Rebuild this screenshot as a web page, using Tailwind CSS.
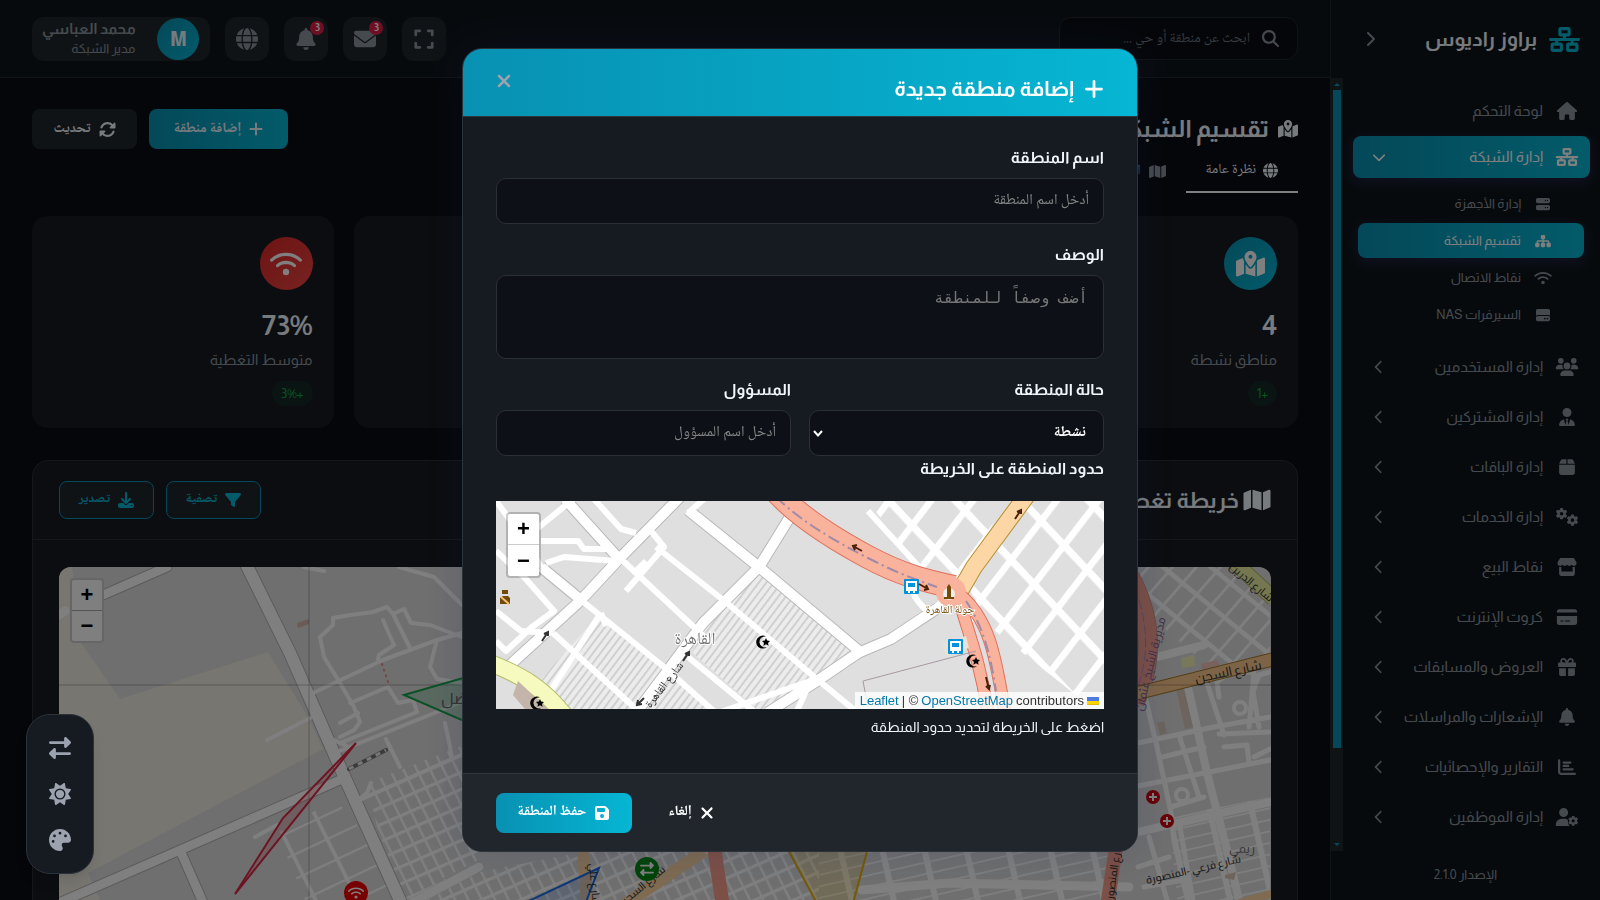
<!DOCTYPE html>
<html lang="ar" dir="rtl">
<head>
    <meta charset="UTF-8">
    <meta name="viewport" content="width=device-width, initial-scale=1.0">
    <title>براوز راديوس - تقسيم الشبكة</title>
    <script src="https://cdn.jsdelivr.net/npm/@tailwindcss/browser@4"></script>
</head>
<body class="h-screen overflow-hidden bg-[#0a0d13] text-[#f0f6fc] font-[Almarai,'Noto_Sans',sans-serif]">

    <!-- Icons -->
    <svg class="hidden">
        <symbol id="network" viewBox="0 0 640 512"><path d="M256 64H384v64H256V64zM240 0c-26.5 0-48 21.5-48 48v96c0 26.5 21.5 48 48 48h48v32H32c-17.7 0-32 14.3-32 32s14.3 32 32 32h96v32H80c-26.5 0-48 21.5-48 48v96c0 26.5 21.5 48 48 48H240c26.5 0 48-21.5 48-48V368c0-26.5-21.5-48-48-48H192V288H448v32H400c-26.5 0-48 21.5-48 48v96c0 26.5 21.5 48 48 48H560c26.5 0 48-21.5 48-48V368c0-26.5-21.5-48-48-48H512V288h96c17.7 0 32-14.3 32-32s-14.3-32-32-32H352V192h48c26.5 0 48-21.5 48-48V48c0-26.5-21.5-48-48-48H240zM96 448V384H224v64H96zm320-64H544v64H416V384z"/></symbol>
        <symbol id="home" viewBox="0 0 576 512"><path d="M575.8 255.5c0 18-15 32.1-32 32.1h-32l.7 160.2c0 2.7-.2 5.4-.5 8.1V472c0 22.1-17.9 40-40 40H456c-1.1 0-2.2 0-3.3-.1c-1.4 .1-2.8 .1-4.2 .1H416 392c-22.1 0-40-17.9-40-40V448 384c0-17.7-14.3-32-32-32H256c-17.7 0-32 14.3-32 32v64 24c0 22.1-17.9 40-40 40H160 128.1c-1.5 0-3-.1-4.5-.2c-1.2 .1-2.4 .2-3.6 .2H104c-22.1 0-40-17.9-40-40V360c0-.9 0-1.9 .1-2.8V287.6H32c-18 0-32-14-32-32.1c0-9 3-17 10-24L266.4 8c7-7 15-8 22-8s15 2 21 7L564.8 231.5c8 7 12 15 11 24z"/></symbol>
        <symbol id="server" viewBox="0 0 512 512"><path d="M64 32C28.7 32 0 60.7 0 96v64c0 35.3 28.7 64 64 64H448c35.3 0 64-28.7 64-64V96c0-35.3-28.7-64-64-64H64zm280 72a24 24 0 1 1 0 48 24 24 0 1 1 0-48zm48 24a24 24 0 1 1 48 0 24 24 0 1 1 -48 0zM64 288c-35.3 0-64 28.7-64 64v64c0 35.3 28.7 64 64 64H448c35.3 0 64-28.7 64-64V352c0-35.3-28.7-64-64-64H64zm280 72a24 24 0 1 1 0 48 24 24 0 1 1 0-48zm56 24a24 24 0 1 1 48 0 24 24 0 1 1 -48 0z"/></symbol>
        <symbol id="sitemap" viewBox="0 0 576 512"><path d="M208 80c0-26.5 21.5-48 48-48h64c26.5 0 48 21.5 48 48v64c0 26.5-21.5 48-48 48h-8v40H464c30.9 0 56 25.1 56 56v32h8c26.5 0 48 21.5 48 48v64c0 26.5-21.5 48-48 48H464c-26.5 0-48-21.5-48-48V368c0-26.5 21.5-48 48-48h8V288c0-4.4-3.6-8-8-8H312v40h8c26.5 0 48 21.5 48 48v64c0 26.5-21.5 48-48 48H256c-26.5 0-48-21.5-48-48V368c0-26.5 21.5-48 48-48h8V280H112c-4.4 0-8 3.6-8 8v32h8c26.5 0 48 21.5 48 48v64c0 26.5-21.5 48-48 48H48c-26.5 0-48-21.5-48-48V368c0-26.5 21.5-48 48-48h8V288c0-30.9 25.1-56 56-56H264V192h-8c-26.5 0-48-21.5-48-48V80z"/></symbol>
        <symbol id="wifi" viewBox="0 0 640 512"><path d="M54.2 202.9C123.2 136.7 216.8 96 320 96s196.8 40.7 265.8 106.9c12.8 12.2 33 11.8 45.2-.9s11.8-33-.9-45.2C549.7 79.5 440.4 32 320 32S90.3 79.5 9.8 156.7C-2.9 169-3.3 189.2 8.9 202s32.5 13.2 45.2 .9zM320 256c56.8 0 108.6 21.1 148.2 56c13.3 11.7 33.5 10.4 45.2-2.8s10.4-33.5-2.8-45.2C459.8 219.2 393 192 320 192s-139.8 27.2-190.5 72c-13.3 11.7-14.5 31.9-2.8 45.2s31.9 14.5 45.2 2.8c39.5-34.9 91.3-56 148.2-56zm64 160a64 64 0 1 0 -128 0 64 64 0 1 0 128 0z"/></symbol>
        <symbol id="hdd" viewBox="0 0 512 512"><path d="M0 96C0 60.7 28.7 32 64 32H448c35.3 0 64 28.7 64 64V280.4c-17-15.2-39.4-24.4-64-24.4H64c-24.6 0-47 9.2-64 24.4V96zM64 288H448c35.3 0 64 28.7 64 64v64c0 35.3-28.7 64-64 64H64c-35.3 0-64-28.7-64-64V352c0-35.3 28.7-64 64-64zM320 416a32 32 0 1 0 0-64 32 32 0 1 0 0 64zm128-32a32 32 0 1 0 -64 0 32 32 0 1 0 64 0z"/></symbol>
        <symbol id="users" viewBox="0 0 640 512"><path d="M144 0a80 80 0 1 1 0 160A80 80 0 1 1 144 0zM512 0a80 80 0 1 1 0 160A80 80 0 1 1 512 0zM0 298.7C0 239.8 47.8 192 106.7 192h42.7c15.9 0 31 3.5 44.6 9.7c-1.3 7.2-1.9 14.7-1.9 22.3c0 38.2 16.8 72.5 43.3 96c-.2 0-.4 0-.7 0H21.3C9.6 320 0 310.4 0 298.7zM405.3 320c-.2 0-.4 0-.7 0c26.6-23.5 43.3-57.8 43.3-96c0-7.6-.7-15-1.9-22.3c13.6-6.3 28.7-9.7 44.6-9.7h42.7C592.2 192 640 239.8 640 298.7c0 11.8-9.6 21.3-21.3 21.3H405.3zM224 224a96 96 0 1 1 192 0 96 96 0 1 1 -192 0zM128 485.3C128 411.7 187.7 352 261.3 352H378.7C452.3 352 512 411.7 512 485.3c0 14.7-11.9 26.7-26.7 26.7H154.7c-14.7 0-26.7-11.9-26.7-26.7z"/></symbol>
        <symbol id="user-tie" viewBox="0 0 448 512"><path d="M96 128a128 128 0 1 0 256 0A128 128 0 1 0 96 128zm94.5 200.2l18.6 31L175.8 483.1l-36-146.9c-2-8.1-9.8-13.4-17.9-11.3C51.9 342.4 0 405.8 0 481.3c0 17 13.8 30.7 30.7 30.7H417.3c17 0 30.7-13.8 30.7-30.7c0-75.5-51.9-138.9-121.9-156.4c-8.1-2-15.9 3.3-17.9 11.3l-36 146.9L238.9 359.2l18.6-31c6.4-10.7-1.3-24.2-13.7-24.2H224 204.3c-12.4 0-20.1 13.6-13.7 24.2z"/></symbol>
        <symbol id="box" viewBox="0 0 448 512"><path d="M50.7 58.5L0 160H208V32H93.7C75.5 32 58.9 42.3 50.7 58.5zM240 160H448L397.3 58.5C389.1 42.3 372.5 32 354.3 32H240V160zm208 32H0V416c0 35.3 28.7 64 64 64H384c35.3 0 64-28.7 64-64V192z"/></symbol>
        <symbol id="gear" viewBox="0 0 512 512"><path d="M495.9 166.6c3.2 8.7 .5 18.4-6.4 24.6l-43.3 39.4c1.1 8.3 1.7 16.8 1.7 25.4s-.6 17.1-1.7 25.4l43.3 39.4c6.9 6.2 9.6 15.9 6.4 24.6c-4.4 11.9-9.7 23.3-15.8 34.3l-4.7 8.1c-6.6 11-14 21.4-22.1 31.2c-5.9 7.2-15.7 9.6-24.5 6.8l-55.7-17.7c-13.4 10.3-28.2 18.9-44 25.4l-12.5 57.1c-2 9.1-9 16.3-18.2 17.8c-13.8 2.3-28 3.5-42.5 3.5s-28.7-1.2-42.5-3.5c-9.2-1.5-16.2-8.7-18.2-17.8l-12.5-57.1c-15.8-6.5-30.6-15.1-44-25.4L83.1 425.9c-8.8 2.8-18.6 .3-24.5-6.8c-8.1-9.8-15.5-20.2-22.1-31.2l-4.7-8.1c-6.1-11-11.4-22.4-15.8-34.3c-3.2-8.7-.5-18.4 6.4-24.6l43.3-39.4C64.6 273.1 64 264.6 64 256s.6-17.1 1.7-25.4L22.4 191.2c-6.9-6.2-9.6-15.9-6.4-24.6c4.4-11.9 9.7-23.3 15.8-34.3l4.7-8.1c6.6-11 14-21.4 22.1-31.2c5.9-7.2 15.7-9.6 24.5-6.8l55.7 17.7c13.4-10.3 28.2-18.9 44-25.4l12.5-57.1c2-9.1 9-16.3 18.2-17.8C227.3 1.2 241.5 0 256 0s28.7 1.2 42.5 3.5c9.2 1.5 16.2 8.7 18.2 17.8l12.5 57.1c15.8 6.5 30.6 15.1 44 25.4l55.7-17.7c8.8-2.8 18.6-.3 24.5 6.8c8.1 9.8 15.5 20.2 22.1 31.2l4.7 8.1c6.1 11 11.4 22.4 15.8 34.3zM256 336a80 80 0 1 0 0-160 80 80 0 1 0 0 160z"/></symbol>
        <symbol id="gears" viewBox="0 0 640 512"><use href="#gear" width="330" height="330"/><use href="#gear" x="310" y="180" width="330" height="330"/></symbol>
        <symbol id="user-gear" viewBox="0 0 640 512"><path d="M224 256A128 128 0 1 0 224 0a128 128 0 1 0 0 256zm-45.7 48C79.800 304 0 383.800 0 482.300C0 498.700 13.300 512 29.700 512H392c-35-38-52-98-45-170c-27-24-60-38-98-38z"/><use href="#gear" x="352" y="220" width="288" height="292"/></symbol>
        <symbol id="store" viewBox="0 0 576 512"><path d="M547.6 103.8L490.3 13.1C485.2 5 476.1 0 466.4 0H109.6C99.9 0 90.8 5 85.7 13.1L28.3 103.8c-29.6 46.8-3.4 111.9 51.9 119.4c4 .5 8.1 .8 12.1 .8c26.1 0 49.3-11.4 65.2-29c15.9 17.6 39.1 29 65.2 29c26.1 0 49.3-11.4 65.2-29c15.9 17.6 39.1 29 65.2 29c26.2 0 49.3-11.4 65.2-29c16 17.6 39.1 29 65.2 29c4.1 0 8.1-.3 12.1-.8c55.5-7.4 81.8-72.5 52.1-119.4zM499.7 254.9l-.1 0c-5.3 .7-10.7 1.1-16.2 1.1c-12.4 0-24.3-1.9-35.4-5.3V384H128V250.6c-11.2 3.5-23.2 5.4-35.6 5.4c-5.5 0-11-.4-16.300-1.100l-.1 0c-4.100-.6-8.100-1.300-12-2.300V384v64c0 35.300 28.700 64 64 64H448c35.300 0 64-28.700 64-64V384 252.600c-4 1-8 1.800-12.300 2.300z"/></symbol>
        <symbol id="card" viewBox="0 0 576 512"><path d="M64 32C28.700 32 0 60.700 0 96v32H576V96c0-35.300-28.700-64-64-64H64zM576 224H0V416c0 35.300 28.700 64 64 64H512c35.300 0 64-28.700 64-64V224zM112 352h64c8.800 0 16 7.200 16 16s-7.200 16-16 16H112c-8.800 0-16-7.200-16-16s7.200-16 16-16zm112 16c0-8.800 7.200-16 16-16H368c8.800 0 16 7.200 16 16s-7.200 16-16 16H240c-8.800 0-16-7.200-16-16z"/></symbol>
        <symbol id="gift" viewBox="0 0 512 512"><path d="M190.5 68.8L225.3 128H224 152c-22.1 0-40-17.9-40-40s17.9-40 40-40h2.2c14.9 0 28.8 7.9 36.3 20.8zM64 88c0 14.4 3.500 28 9.600 40H32c-17.700 0-32 14.300-32 32v64c0 17.700 14.300 32 32 32H480c17.700 0 32-14.300 32-32V160c0-17.700-14.300-32-32-32H438.400c6.100-12 9.600-25.600 9.600-40c0-48.600-39.400-88-88-88h-2.200c-31.900 0-61.500 16.900-77.700 44.400L256 85.500l-24.100-41C215.700 16.900 186.100 0 154.200 0H152C103.400 0 64 39.400 64 88zm336 0c0 22.100-17.900 40-40 40H288h-1.300l34.800-59.200C329.100 55.900 342.900 48 357.800 48H360c22.100 0 40 17.900 40 40zM32 288V464c0 26.500 21.500 48 48 48H224V288H32zM288 512H432c26.500 0 48-21.500 48-48V288H288V512z"/></symbol>
        <symbol id="bell" viewBox="0 0 448 512"><path d="M224 0c-17.7 0-32 14.3-32 32V51.2C119 66 64 130.6 64 208v18.8c0 47-17.3 92.4-48.5 127.6l-7.4 8.3c-8.4 9.4-10.4 22.9-5.3 34.4S19.4 416 32 416H416c12.6 0 24-7.4 29.2-18.9s3.1-25-5.3-34.4l-7.4-8.3C401.3 319.2 384 273.9 384 226.8V208c0-77.4-55-142-128-156.8V32c0-17.7-14.3-32-32-32zm45.3 493.3c12-12 18.7-28.3 18.7-45.3H224 160c0 17 6.7 33.3 18.7 45.3s28.3 18.7 45.3 18.7s33.3-6.7 45.3-18.7z"/></symbol>
        <symbol id="chart" viewBox="0 0 512 512"><path d="M32 32c17.7 0 32 14.3 32 32V400c0 8.8 7.2 16 16 16H480c17.7 0 32 14.3 32 32s-14.3 32-32 32H80c-44.2 0-80-35.8-80-80V64C0 46.3 14.3 32 32 32zm96 96c0-17.7 14.3-32 32-32l192 0c17.7 0 32 14.3 32 32s-14.3 32-32 32H160c-17.7 0-32-14.3-32-32zm32 64H288c17.7 0 32 14.3 32 32s-14.3 32-32 32H160c-17.7 0-32-14.3-32-32s14.3-32 32-32zm0 96H416c17.7 0 32 14.3 32 32s-14.3 32-32 32H160c-17.7 0-32-14.3-32-32s14.3-32 32-32z"/></symbol>
        <symbol id="map-pin" viewBox="0 0 576 512"><path d="M408 120c0 54.6-73.1 151.9-105.2 192c-7.7 9.6-22 9.6-29.6 0C241.1 271.9 168 174.6 168 120C168 53.7 221.7 0 288 0s120 53.7 120 120zm8 80.4c3.5-6.9 6.7-13.8 9.6-20.6c.5-1.2 1-2.5 1.5-3.7l116-46.4C558.9 123.4 576 135 576 152V422.8c0 9.8-6 18.6-15.1 22.3L416 503V200.4zM137.6 138.3c2.4 14.1 7.2 28.3 12.8 41.5c2.9 6.8 6.1 13.7 9.6 20.6V451.8L32.9 502.7C17.1 509 0 497.4 0 480.4V209.6c0-9.8 6-18.6 15.1-22.3l122.6-49zM327.8 332c13.9-17.4 35.7-45.7 56.2-77V504.3L192 449.4V255c20.500 31.300 42.300 59.600 56.200 77c20.500 25.600 59.100 25.600 79.600 0zM288 152a40 40 0 1 0 0-80 40 40 0 1 0 0 80z"/></symbol>
        <symbol id="map" viewBox="0 0 576 512"><path d="M384 476.1L192 421.2V35.9L384 90.8V476.1zm32-1.2V88.4L543.1 37.5c15.8-6.3 32.9 5.3 32.9 22.3V394.6c0 9.8-6 18.6-15.1 22.3L416 474.8zM15.1 95.1L160 37.2V423.6L32.9 474.5C17.1 480.8 0 469.2 0 452.2V117.4c0-9.8 6-18.6 15.1-22.3z"/></symbol>
        <symbol id="globe" viewBox="0 0 512 512"><path d="M352 256c0 22.2-1.2 43.6-3.3 64H163.3c-2.2-20.4-3.3-41.8-3.3-64s1.2-43.6 3.3-64H348.7c2.2 20.4 3.3 41.8 3.3 64zm28.8-64H503.9c5.3 20.5 8.1 41.9 8.1 64s-2.8 43.5-8.1 64H380.8c2.1-20.6 3.2-42 3.2-64s-1.1-43.4-3.2-64zm112.6-32H376.7c-10-63.9-29.8-117.4-55.3-151.6c78.3 20.7 142 77.5 171.9 151.6zm-149.1 0H167.7c6.1-36.4 15.5-68.6 27-94.7c10.5-23.6 22.2-40.7 33.5-51.5C239.4 3.2 248.7 0 256 0s16.6 3.2 27.8 13.8c11.3 10.8 23 27.9 33.5 51.5c11.6 26 20.9 58.2 27 94.7zm-209 0H18.6C48.6 85.9 112.2 29.1 190.6 8.4C165.1 42.6 145.3 96.1 135.3 160zM8.1 192H131.2c-2.1 20.6-3.2 42-3.2 64s1.1 43.4 3.2 64H8.1C2.8 299.5 0 278.1 0 256s2.8-43.5 8.1-64zM194.7 446.6c-11.6-26-20.9-58.2-27-94.6H344.3c-6.1 36.4-15.5 68.6-27 94.6c-10.5 23.6-22.2 40.7-33.5 51.5C272.6 508.8 263.3 512 256 512s-16.6-3.2-27.8-13.8c-11.3-10.8-23-27.9-33.5-51.5zM135.3 352c10 63.9 29.8 117.4 55.3 151.6C112.2 482.9 48.6 426.1 18.6 352H135.3zm358.1 0c-30 74.1-93.6 130.9-171.9 151.6c25.5-34.2 45.2-87.7 55.3-151.6H493.4z"/></symbol>
        <symbol id="mail" viewBox="0 0 512 512"><path d="M48 64C21.5 64 0 85.5 0 112c0 15.1 7.1 29.3 19.2 38.4L236.8 313.6c11.4 8.5 27 8.5 38.4 0L492.8 150.4c12.1-9.1 19.2-23.3 19.2-38.4c0-26.5-21.5-48-48-48H48zM0 176V384c0 35.3 28.7 64 64 64H448c35.3 0 64-28.7 64-64V176L294.4 339.2c-22.8 17.1-54 17.1-76.8 0L0 176z"/></symbol>
        <symbol id="expand" viewBox="0 0 448 512"><path d="M32 32C14.3 32 0 46.3 0 64v96c0 17.7 14.3 32 32 32s32-14.3 32-32V96h64c17.7 0 32-14.3 32-32s-14.3-32-32-32H32zM64 352c0-17.7-14.3-32-32-32s-32 14.3-32 32v96c0 17.7 14.3 32 32 32h96c17.7 0 32-14.3 32-32s-14.3-32-32-32H64V352zM320 32c-17.7 0-32 14.3-32 32s14.3 32 32 32h64v64c0 17.7 14.3 32 32 32s32-14.3 32-32V64c0-17.7-14.3-32-32-32H320zM448 352c0-17.7-14.3-32-32-32s-32 14.3-32 32v64H320c-17.7 0-32 14.3-32 32s14.3 32 32 32h96c17.7 0 32-14.3 32-32V352z"/></symbol>
        <symbol id="search" viewBox="0 0 512 512"><path d="M416 208c0 45.9-14.9 88.3-40 122.7L502.6 457.4c12.5 12.5 12.5 32.8 0 45.3s-32.8 12.5-45.3 0L330.7 376c-34.4 25.2-76.8 40-122.7 40C93.1 416 0 322.9 0 208S93.1 0 208 0S416 93.1 416 208zM208 352a144 144 0 1 0 0-288 144 144 0 1 0 0 288z"/></symbol>
        <symbol id="plus" viewBox="0 0 448 512"><path d="M256 80c0-17.7-14.3-32-32-32s-32 14.3-32 32V224H48c-17.7 0-32 14.3-32 32s14.3 32 32 32H192V432c0 17.7 14.3 32 32 32s32-14.3 32-32V288H400c17.7 0 32-14.3 32-32s-14.3-32-32-32H256V80z"/></symbol>
        <symbol id="sync" viewBox="0 0 512 512"><path d="M142.9 142.9c62.2-62.2 162.7-62.5 225.3-1L327 183c-6.9 6.9-8.9 17.2-5.2 26.2s12.5 14.8 22.2 14.8H463.5H472c13.3 0 24-10.7 24-24V72c0-9.7-5.8-18.5-14.8-22.2s-19.3-1.7-26.2 5.2L413.4 96.6c-87.6-86.5-228.7-86.2-315.8 1C73.2 122 55.6 150.7 44.8 181.4c-5.9 16.7 2.9 34.9 19.5 40.8s34.9-2.9 40.8-19.5c7.7-21.8 20.2-42.3 37.8-59.8zM16 312v7.6 .7V440c0 9.7 5.8 18.5 14.8 22.2s19.3 1.7 26.2-5.2l41.6-41.6c87.6 86.5 228.7 86.2 315.8-1c24.4-24.4 42.1-53.1 52.9-83.7c5.9-16.7-2.9-34.9-19.5-40.8s-34.9 2.9-40.8 19.5c-7.7 21.8-20.2 42.3-37.8 59.8c-62.2 62.2-162.7 62.5-225.3 1L185 329c6.9-6.9 8.9-17.2 5.2-26.2s-12.5-14.8-22.2-14.8H48.4h-.7H40c-13.3 0-24 10.7-24 24z"/></symbol>
        <symbol id="filter" viewBox="0 0 512 512"><path d="M3.9 54.9C10.5 40.9 24.5 32 40 32H472c15.5 0 29.5 8.9 36.1 22.9s4.6 30.5-5.2 42.5L320 320.9V448c0 12.1-6.8 23.2-17.7 28.6s-23.8 4.3-33.5-3l-64-48c-8.1-6-12.8-15.5-12.8-25.6V320.9L9 97.3C-.7 85.4-2.8 68.8 3.9 54.9z"/></symbol>
        <symbol id="download" viewBox="0 0 512 512"><path d="M288 32c0-17.7-14.3-32-32-32s-32 14.3-32 32V274.7l-73.4-73.4c-12.5-12.5-32.8-12.5-45.3 0s-12.5 32.8 0 45.3l128 128c12.5 12.5 32.8 12.5 45.3 0l128-128c12.5-12.5 12.5-32.8 0-45.3s-32.8-12.5-45.3 0L288 274.7V32zM64 352c-35.3 0-64 28.7-64 64v32c0 35.3 28.7 64 64 64H448c35.3 0 64-28.7 64-64V416c0-35.3-28.7-64-64-64H346.5l-45.3 45.3c-25 25-65.5 25-90.5 0L165.5 352H64zm368 56a24 24 0 1 1 0 48 24 24 0 1 1 0-48z"/></symbol>
        <symbol id="xmark" viewBox="0 0 384 512"><path d="M342.6 150.6c12.5-12.5 12.5-32.8 0-45.3s-32.8-12.5-45.3 0L192 210.7 86.6 105.4c-12.5-12.5-32.8-12.5-45.3 0s-12.5 32.8 0 45.3L146.7 256 41.4 361.4c-12.5 12.5-12.5 32.8 0 45.3s32.8 12.5 45.3 0L192 301.3 297.4 406.6c12.5 12.5 32.8 12.5 45.3 0s12.5-32.8 0-45.3L237.3 256 342.6 150.6z"/></symbol>
        <symbol id="save" viewBox="0 0 448 512"><path d="M64 32C28.7 32 0 60.7 0 96V416c0 35.3 28.7 64 64 64H384c35.3 0 64-28.7 64-64V173.3c0-17-6.7-33.3-18.7-45.3L352 50.7C340 38.7 323.7 32 306.7 32H64zm0 96c0-17.7 14.3-32 32-32H288c17.7 0 32 14.3 32 32v64c0 17.7-14.3 32-32 32H96c-17.7 0-32-14.3-32-32V128zM224 288a64 64 0 1 1 0 128 64 64 0 1 1 0-128z"/></symbol>
        <symbol id="chevron" viewBox="0 0 320 512"><path d="M9.4 233.4c-12.5 12.5-12.5 32.8 0 45.3l192 192c12.5 12.5 32.8 12.5 45.3 0s12.5-32.8 0-45.3L77.3 256 246.6 86.6c12.5-12.5 12.5-32.8 0-45.3s-32.8-12.5-45.3 0l-192 192z"/></symbol>
        <symbol id="swap" viewBox="0 0 512 512"><path d="M32 96l320 0V32c0-12.9 7.8-24.6 19.8-29.6s25.7-2.2 34.900 6.900l96 96c6 6 9.400 14.100 9.400 22.600s-3.400 16.600-9.400 22.600l-96 96c-9.200 9.200-22.900 11.900-34.900 6.900s-19.800-16.600-19.800-29.600V160L32 160c-17.700 0-32-14.300-32-32s14.300-32 32-32zM480 352c17.700 0 32 14.300 32 32s-14.300 32-32 32H160v64c0 12.900-7.800 24.600-19.800 29.600s-25.700 2.200-34.900-6.900l-96-96c-6-6-9.400-14.100-9.400-22.600s3.400-16.600 9.400-22.600l96-96c9.200-9.200 22.900-11.900 34.900-6.900s19.800 16.600 19.800 29.600l0 64H480z"/></symbol>
        <symbol id="sun" viewBox="0 0 512 512"><path d="M361.5 1.200c5 2.100 8.600 6.600 9.600 11.900L391 121l107.900 19.800c5.300 1 9.800 4.600 11.900 9.600s1.500 10.700-1.600 15.200L446.900 256l62.300 90.300c3.100 4.500 3.700 10.200 1.600 15.200s-6.600 8.600-11.900 9.600L391 391 371.100 498.900c-1 5.300-4.600 9.800-9.600 11.900s-10.700 1.500-15.200-1.600L256 446.900l-90.300 62.300c-4.500 3.100-10.200 3.700-15.200 1.600s-8.600-6.600-9.600-11.900L121 391 13.100 371.100c-5.300-1-9.800-4.600-11.900-9.600s-1.500-10.700 1.600-15.200L65.100 256 2.800 165.700c-3.100-4.500-3.700-10.200-1.600-15.200s6.600-8.600 11.900-9.600L121 121 140.900 13.100c1-5.300 4.600-9.800 9.600-11.900s10.700-1.500 15.200 1.600L256 65.100 346.300 2.800c4.500-3.100 10.200-3.700 15.200-1.600zM160 256a96 96 0 1 1 192 0 96 96 0 1 1 -192 0zm224 0a128 128 0 1 0 -256 0 128 128 0 1 0 256 0z"/></symbol>
        <symbol id="palette" viewBox="0 0 512 512"><path d="M512 256c0 .9 0 1.800 0 2.700c-.4 36.500-33.600 61.300-70.100 61.300H344c-26.500 0-48 21.500-48 48c0 3.400 .4 6.700 1 9.900c2.100 10.200 6.500 20 10.800 29.900c6.100 13.800 12.100 27.500 12.100 42c0 31.800-21.600 60.700-53.400 62c-3.500 .1-7 .2-10.600 .2C114.600 512 0 397.400 0 256S114.600 0 256 0S512 114.600 512 256zM128 288a32 32 0 1 0 -64 0 32 32 0 1 0 64 0zm0-96a32 32 0 1 0 0-64 32 32 0 1 0 0 64zM288 96a32 32 0 1 0 -64 0 32 32 0 1 0 64 0zm96 96a32 32 0 1 0 0-64 32 32 0 1 0 0 64z"/></symbol>
    </svg>

    <div class="flex h-full">
        <!-- Sidebar -->
        <aside class="flex w-[270px] shrink-0 flex-col border-l border-[#21262d] bg-[#0f151b]">
            <div class="flex h-[78px] shrink-0 items-center gap-3 pr-5 pl-[34px]">
                <svg class="h-[25px] w-[31px] fill-[#06b6d4]"><use href="#network"/></svg>
                <h2 class="grow text-xl font-bold">براوز راديوس</h2>
                <button type="button" aria-label="طي القائمة"><svg class="h-4 w-[10px] rotate-180 fill-[#8b949e]"><use href="#chevron"/></svg></button>
            </div>
            <div class="flex h-[773px] shrink-0">
                <nav class="grow overflow-hidden px-[10px] pt-3 text-[15px] whitespace-nowrap text-[#8b949e]">
                    <a href="#" class="flex h-[42px] items-center gap-3 pr-[11px]"><svg class="h-[18px] w-6 fill-current"><use href="#home"/></svg>لوحة التحكم</a>
                    <a href="#" class="mt-1 flex h-[42px] items-center gap-3 rounded-lg bg-linear-to-l from-[#06b6d4] to-[#0891b2] pr-[11px] pl-5 text-white shadow-[0_4px_12px_#6366f133]"><svg class="h-[18px] w-6 fill-current"><use href="#network"/></svg><span class="grow">إدارة الشبكة</span><svg class="h-[14px] w-3 -rotate-90 fill-current"><use href="#chevron"/></svg></a>
                    <div class="my-2 flex flex-col gap-[2px] pr-[6px] pl-[5px] text-[13px]">
                        <a href="#" class="flex h-[35px] items-center gap-[13px] pr-8"><svg class="h-[14px] w-[18px] fill-current"><use href="#server"/></svg>إدارة الأجهزة</a>
                        <a href="#" class="flex h-[35px] items-center gap-[13px] rounded-lg bg-linear-to-l from-[#06b6d4] to-[#0891b2] pr-8 text-white shadow-[0_4px_12px_#6366f133]"><svg class="h-[14px] w-[18px] fill-current"><use href="#sitemap"/></svg>تقسيم الشبكة</a>
                        <a href="#" class="flex h-[35px] items-center gap-[13px] pr-8"><svg class="h-[14px] w-[18px] fill-current"><use href="#wifi"/></svg>نقاط الاتصال</a>
                        <a href="#" class="flex h-[35px] items-center gap-[13px] pr-8"><svg class="h-[14px] w-[18px] fill-current"><use href="#hdd"/></svg>السيرفرات NAS</a>
                    </div>
                    <div class="flex flex-col gap-2 pt-[6px]">
                        <a href="#" class="flex h-[42px] items-center gap-3 pr-[11px] pl-5"><svg class="h-[18px] w-6 fill-current"><use href="#users"/></svg><span class="grow">إدارة المستخدمين</span><svg class="h-[14px] w-3 fill-current"><use href="#chevron"/></svg></a>
                        <a href="#" class="flex h-[42px] items-center gap-3 pr-[11px] pl-5"><svg class="h-[18px] w-6 fill-current"><use href="#user-tie"/></svg><span class="grow">إدارة المشتركين</span><svg class="h-[14px] w-3 fill-current"><use href="#chevron"/></svg></a>
                        <a href="#" class="flex h-[42px] items-center gap-3 pr-[11px] pl-5"><svg class="h-[18px] w-6 fill-current"><use href="#box"/></svg><span class="grow">إدارة الباقات</span><svg class="h-[14px] w-3 fill-current"><use href="#chevron"/></svg></a>
                        <a href="#" class="flex h-[42px] items-center gap-3 pr-[11px] pl-5"><svg class="h-[18px] w-6 fill-current"><use href="#gears"/></svg><span class="grow">إدارة الخدمات</span><svg class="h-[14px] w-3 fill-current"><use href="#chevron"/></svg></a>
                        <a href="#" class="flex h-[42px] items-center gap-3 pr-[11px] pl-5"><svg class="h-[18px] w-6 fill-current"><use href="#store"/></svg><span class="grow">نقاط البيع</span><svg class="h-[14px] w-3 fill-current"><use href="#chevron"/></svg></a>
                        <a href="#" class="flex h-[42px] items-center gap-3 pr-[11px] pl-5"><svg class="h-[18px] w-6 fill-current"><use href="#card"/></svg><span class="grow">كروت الإنترنت</span><svg class="h-[14px] w-3 fill-current"><use href="#chevron"/></svg></a>
                        <a href="#" class="flex h-[42px] items-center gap-3 pr-[11px] pl-5"><svg class="h-[18px] w-6 fill-current"><use href="#gift"/></svg><span class="grow">العروض والمسابقات</span><svg class="h-[14px] w-3 fill-current"><use href="#chevron"/></svg></a>
                        <a href="#" class="flex h-[42px] items-center gap-3 pr-[11px] pl-5"><svg class="h-[18px] w-6 fill-current"><use href="#bell"/></svg><span class="grow">الإشعارات والمراسلات</span><svg class="h-[14px] w-3 fill-current"><use href="#chevron"/></svg></a>
                        <a href="#" class="flex h-[42px] items-center gap-3 pr-[11px] pl-5"><svg class="h-[18px] w-6 fill-current"><use href="#chart"/></svg><span class="grow">التقارير والإحصائيات</span><svg class="h-[14px] w-3 fill-current"><use href="#chevron"/></svg></a>
                        <a href="#" class="flex h-[42px] items-center gap-3 pr-[11px] pl-5"><svg class="h-[18px] w-6 fill-current"><use href="#user-gear"/></svg><span class="grow">إدارة الموظفين</span><svg class="h-[14px] w-3 fill-current"><use href="#chevron"/></svg></a>
                    </div>
                </nav>
                <!-- Scroll bar -->
                <div class="flex w-3 shrink-0 flex-col items-center justify-between bg-[#20262a] px-[2px]">
                    <svg class="h-3 w-[6px] shrink-0 fill-[#0891b2]" viewBox="0 0 6 12"><path d="M0 8h6L3 5z"/></svg>
                    <div class="h-[658px] w-full bg-[#0891b2]"></div>
                    <svg class="mt-auto h-3 w-[6px] shrink-0 fill-[#0891b2]" viewBox="0 0 6 12"><path d="M0 4h6L3 7z"/></svg>
                </div>
            </div>
            <p class="pt-[14px] text-center text-[13px] text-[#8b949e]">الإصدار 2.1.0</p>
        </aside>

        <div class="flex min-w-0 grow flex-col">
            <!-- Top bar -->
            <header class="flex h-[78px] shrink-0 items-center justify-between border-b border-[#21262d] bg-[#0f151b] px-8">
                <label class="flex h-[43px] w-[239px] items-center gap-3 rounded-xl border border-[#21262d] bg-[#0a0d13] px-[18px]">
                    <svg class="h-[17px] w-[17px] shrink-0 fill-[#8b949e]"><use href="#search"/></svg>
                    <input type="text" aria-label="بحث" placeholder="ابحث عن منطقة أو حي ..." class="w-full min-w-0 bg-transparent font-['Noto_Naskh_Arabic',sans-serif] text-sm outline-none placeholder:text-[#6e7681]">
                </label>
                <div class="flex items-center gap-[15px]">
                    <button type="button" aria-label="ملء الشاشة" class="flex h-11 w-11 items-center justify-center rounded-xl bg-[#20262a]"><svg class="h-[22px] w-5 fill-[#8b949e]"><use href="#expand"/></svg></button>
                    <button type="button" aria-label="الرسائل" class="relative flex h-11 w-11 items-center justify-center rounded-xl bg-[#20262a]"><svg class="h-[22px] w-[22px] fill-[#8b949e]"><use href="#mail"/></svg><span class="absolute top-1 right-1 flex h-[14px] w-[14px] items-center justify-center rounded-full bg-[#e11d48] text-[10px] font-bold text-white">3</span></button>
                    <button type="button" aria-label="الإشعارات" class="relative flex h-11 w-11 items-center justify-center rounded-xl bg-[#20262a]"><svg class="h-[22px] w-[22px] fill-[#8b949e]"><use href="#bell"/></svg><span class="absolute top-1 right-1 flex h-[14px] w-[14px] items-center justify-center rounded-full bg-[#e11d48] text-[10px] font-bold text-white">3</span></button>
                    <button type="button" aria-label="اللغة" class="flex h-11 w-11 items-center justify-center rounded-xl bg-[#20262a]"><svg class="h-[22px] w-[22px] fill-[#8b949e]"><use href="#globe"/></svg></button>
                    <div class="flex h-11 items-center gap-[22px] rounded-xl bg-[#20262a] pr-[11px] pl-[10px]">
                        <div class="flex h-[42px] w-[42px] items-center justify-center rounded-full bg-linear-to-br from-[#0891b2] to-[#06b6d4] text-xl font-bold">M</div>
                        <div class="text-[#8b949e]">
                            <div class="text-[15px] leading-5 font-bold">محمد العباسي</div>
                            <div class="text-[13px] leading-5">مدير الشبكة</div>
                        </div>
                    </div>
                </div>
            </header>

            <main class="grow px-8 pt-[31px]">
                <div class="flex h-[84px] items-start justify-between">
                    <div>
                        <h1 class="flex h-10 items-center gap-[9px] text-2xl font-bold"><svg class="h-[18px] w-5 fill-current"><use href="#map-pin"/></svg>تقسيم الشبكة</h1>
                        <div class="flex font-['Noto_Naskh_Arabic',sans-serif] text-[14px]">
                            <a href="#" class="flex h-11 items-center gap-[7px] border-b-2 border-white px-5"><svg class="h-[15px] w-[15px] fill-current"><use href="#globe"/></svg>نظرة عامة</a>
                            <a href="#" class="flex h-11 items-center gap-2 px-5 text-[#8b949e]"><svg class="h-[15px] w-[17px] fill-current"><use href="#map"/></svg>المناطق</a>
                        </div>
                    </div>
                    <div class="flex gap-3 font-['Noto_Naskh_Arabic',sans-serif] text-[14px] font-bold">
                        <button type="button" class="flex h-10 w-[139px] items-center justify-center gap-2 rounded-lg bg-linear-to-l from-[#06b6d4] to-[#0891b2]"><svg class="h-4 w-[14px] fill-current"><use href="#plus"/></svg>إضافة منطقة</button>
                        <button type="button" class="flex h-10 w-[105px] items-center justify-center gap-2 rounded-lg bg-[#20262a]"><svg class="h-[17px] w-[17px] fill-current"><use href="#sync"/></svg>تحديث</button>
                    </div>
                </div>

                <!-- Stat cards -->
                <div class="mt-[23px] grid grid-cols-4 gap-5">
                    <div class="h-[212px] rounded-2xl bg-[#161a20] p-[21px]">
                        <div class="flex h-[53px] w-[53px] items-center justify-center rounded-full bg-linear-to-br from-[#0891b2] to-[#06b6d4]"><svg class="h-[26px] w-[29px] fill-white"><use href="#map-pin"/></svg></div>
                        <div class="mt-[18px] text-[28px] leading-9 font-bold">4</div>
                        <div class="mt-1 text-[15px] leading-6 text-[#8b949e]">مناطق نشطة</div>
                        <span class="mt-[9px] inline-block h-[25px] rounded-full bg-[#16a34a]/10 px-[9px] text-[13px] leading-[25px] text-[#16a34a]">+1</span>
                    </div>
                    <div class="rounded-2xl bg-[#161a20]"></div>
                    <div class="rounded-2xl bg-[#161a20]"></div>
                    <div class="h-[212px] rounded-2xl bg-[#161a20] p-[21px]">
                        <div class="flex h-[53px] w-[53px] items-center justify-center rounded-full bg-linear-to-br from-[#dc2626] to-[#ef4444]"><svg class="h-[26px] w-8 fill-white"><use href="#wifi"/></svg></div>
                        <div class="mt-[18px] text-[28px] leading-9 font-bold"><bdi dir="ltr">73%</bdi></div>
                        <div class="mt-1 text-[15px] leading-6 text-[#8b949e]">متوسط التغطية</div>
                        <span class="mt-[9px] inline-block h-[25px] rounded-full bg-[#16a34a]/10 px-[9px] text-[13px] leading-[25px] text-[#16a34a]"><bdi dir="ltr">3%+</bdi></span>
                    </div>
                </div>

                <!-- Coverage map -->
                <section class="mt-8 rounded-t-2xl border border-[#2a3036] bg-[#161a20]">
                    <div class="flex h-[79px] items-center justify-between border-b border-[#2a3036] px-[26px]">
                        <h2 class="flex items-center gap-1 text-[22px] font-bold"><svg class="h-6 w-7 fill-current"><use href="#map"/></svg>خريطة تغطية الشبكة</h2>
                        <div class="flex gap-3 font-['Noto_Naskh_Arabic',sans-serif] text-[13px] font-bold text-[#06b6d4]">
                            <button type="button" class="flex h-[38px] w-[95px] items-center justify-center gap-2 rounded-lg border border-[#0891b2] bg-[#20262a]"><svg class="h-4 w-4 fill-current"><use href="#filter"/></svg>تصفية</button>
                            <button type="button" class="flex h-[38px] w-[95px] items-center justify-center gap-2 rounded-lg border border-[#0891b2] bg-[#20262a]"><svg class="h-4 w-4 fill-current"><use href="#download"/></svg>تصدير</button>
                        </div>
                    </div>
                    <div class="px-[26px] pt-[27px]">
                        <div dir="ltr" class="relative h-[500px] overflow-hidden rounded-xl bg-[#dedede]">
                            <svg class="h-[500px] w-[1212px]" viewBox="0 0 1212 500">
                                <defs>
                                    <pattern id="g1" width="10" height="10" patternUnits="userSpaceOnUse" patternTransform="matrix(1.1 -.48 .7 1.4 2 3)"><path d="M0 0H10M0 0V10" fill="none" stroke="#fff" stroke-width="4"/></pattern>
                                    <pattern id="g2" width="10" height="10" patternUnits="userSpaceOnUse" patternTransform="matrix(3.4 -1.6 1 2 4 0)"><path d="M0 0H10M0 0V10" fill="none" stroke="#fff" stroke-width="2"/></pattern>
                                    <pattern id="g3" width="10" height="10" patternUnits="userSpaceOnUse" patternTransform="matrix(1.400 1.150 -2 2.300 6 2)"><path d="M0 0H10M0 0V10" fill="none" stroke="#fff" stroke-width="3"/></pattern>
                                    <pattern id="g4" width="10" height="10" patternUnits="userSpaceOnUse" patternTransform="matrix(4 -.9 .25 1.100 0 4)"><path d="M0 0H10M0 0V10" fill="none" stroke="#fff" stroke-width="3"/></pattern>
                                </defs>
                                <path fill="#f0ece2" d="M0 0H13L22 76 61 132 209 85 249 150 264 182 29 306 41 333V500H0z"/>
                                <path fill="#d0b8a8" d="M238 56l12-4v5l-11 4z"/>
                                <!-- dense blocks -->
                                <path fill="url(#g1)" d="M308 216L420 172V293L345 330 318 260z"/>
                                <path fill="url(#g2)" d="M218 266L276 232 300 260 345 333H246z"/>
                                <path fill="url(#g1)" d="M345 320L700 250H760V333H345z"/>
                                <path fill="url(#g4)" d="M760 270H1060V345H760z"/>
                                <path fill="url(#g3)" d="M1071 0H1170L1211 40V93L1150 100 1071 32z"/>
                                <path fill="url(#g4)" d="M1110 250L1211 230V350H1120z"/>
                                <g fill="none" stroke="#fff" stroke-linejoin="round" stroke-linecap="round">
                                    <g stroke="#b5b5b5">
                                        <path stroke-width="14" d="M186-5L231 86 281 200 344 340"/><path stroke-width="11" d="M0 336L128 280 281 213M44 28L108 0M121 283L146 340"/>
                                        <path stroke-width="9" d="M345 340L420 300"/>
                                    </g>
                                    <path stroke-width="12" d="M186-5L231 86 281 200 344 340"/>
                                    <path stroke-width="9" d="M0 336L128 280 281 213M44 28L108 0M121 283L146 340M0 48L6 44M345 340L420 300M803 323L890 316 1070 320"/>
                                    <path stroke-width="4" d="M208 173L251 151M274 51L291 48 314 45 328 40 334 47 351 81M261 70L274 58V51M261 70L265 90 281 116 295 140 301 155 295 163 281 170M254 126L324 93 378 73 403 66M334 47L345 42 352 56 371 58 403 70M291 136L329 120 339 136 354 133 358 145 281 176M281 156L299 146M278 185L403 135M312 216L308 226 300 232M324 53L335 78M319 92L320 88 335 78M378 73L371 100 378 112 403 116M245 0L265 4M340 0L375 10 403 38M386 156L393 190M327 172L341 200M303 232L420 180"/>
                                    <path stroke-width="4" d="M196 270L218 258M268 170L290 180"/>
                                    <path stroke="#777" stroke-width="4" d="M290 202L327 183"/><path stroke="#eee" stroke-width="3" stroke-dasharray="5 5" stroke-linecap="butt" d="M290 202L327 183"/>
                                    <path stroke="#e88" stroke-width="2" stroke-dasharray="1 5" d="M323 97L330 118"/>
                                    <path stroke-width="8" d="M1129 120L1148 206 1168 283 1183 345M1079 265L1211 235M1098 90L1145 78"/>
                                    <path stroke-width="5" d="M1079 219L1211 193M1079 176L1155 160 1211 150M1085 125L1098 180 1115 260M1120 168L1140 230M1103 190L1145 180M1146 110L1165 168M1211 105L1200 108 1194 125 1200 160M1160 167L1210 165M1165 180L1188 178 1190 196M1195 190L1211 182M1160 130L1158 115 1170 106 1195 105 1190 160M1079 300L1110 290M1085 320L1130 312M1090 270L1110 340M1121 260L1135 340M1112 240L1145 230"/>
                                    <circle stroke-width="4" cx="1181" cy="141" r="6"/><circle stroke-width="4" cx="1123" cy="228" r="6"/>
                                </g>
                                <path fill="#d9c9ba" d="M1117 122h8l9 38-8 2zM1098 156l7-2 3 12-7 2zM1166 308l11-3-2 8-9-2z"/>
                                <path fill="#f0f0b8" d="M1122 91l13-3 1 11-13 2z"/>
                                <path fill="#f2c4bc" d="M1142 97l15-4 4 5-18 5z"/>
                                <g fill="none">
                                    <path stroke="#c98" stroke-width="20" d="M1071 10C1092 50 1096 90 1076 135"/><path stroke="#f8a08e" stroke-width="18" d="M1071 10C1092 50 1096 90 1076 135"/>
                                    <path stroke="#b58ab0" stroke-dasharray="10 3" d="M1076 20C1090 60 1090 90 1077 125"/>
                                    <path stroke="#a77b2f" stroke-width="14" d="M1071 128L1215 92"/><path stroke="#fcc98c" stroke-width="12" d="M1071 128L1215 92"/>
                                    <path stroke="#b5bb70" stroke-width="16" d="M1172-8L1215 32"/><path stroke="#e9efa0" stroke-width="14" d="M1172-8L1215 32"/>
                                    <path stroke="#fcd6a4" stroke-width="12" d="M524 280L528 340M645 284L562 340"/>
                                    <path stroke="#f8a08e" stroke-width="14" d="M655 280L664 340M1057 280L1048 340"/>
                                    <path stroke="#fcd6a4" stroke-width="8" d="M1180 336L1215 326"/>
                                </g>
                                <path stroke="#000" stroke-opacity=".25" fill="none" d="M250 0V333M0 118H1212"/>
                                <!-- zones -->
                                <path fill="#16a34a" fill-opacity=".2" stroke="#16a34a" stroke-width="2" d="M345 128L470 92V182z"/>
                                <path fill="#dc3545" fill-opacity=".2" stroke="#dc2645" stroke-width="2" d="M297 176L224 251 176 327z"/>
                                <path fill="#3b82f6" fill-opacity=".2" stroke="#1d6fe8" stroke-width="2" d="M540 301L457 340H525z"/>
                                <path fill="#eab308" fill-opacity=".2" stroke="#eab308" stroke-width="2" d="M722 270L760 340H793L812 270z"/>
                                <g font-family="Almarai, Noto Sans, sans-serif" fill="#333">
                                    <text x="382" y="137" font-size="16" fill="#666" direction="rtl" text-anchor="end">الفضل</text>
                                    <text font-size="13" text-anchor="middle" transform="translate(1170 109) rotate(-12)">شارع السجن</text>
                                    <text font-size="11" text-anchor="middle" transform="translate(1190 18) rotate(40)">شارع الدرين</text>
                                    <text font-size="12" fill="#85609a" text-anchor="middle" transform="translate(1095 98) rotate(-76)">مديرية الشيخ عثمان</text>
                                    <text font-size="13" fill="#777" text-anchor="middle" x="1183" y="286">ريمي</text>
                                    <text font-size="11" text-anchor="middle" transform="translate(1135 306) rotate(-13)">شارع فرعي -المنصورة</text>
                                    <text font-size="11" text-anchor="middle" transform="translate(1058 306) rotate(-82)">شارع المنصورة</text>
                                    <text font-size="11" text-anchor="middle" transform="translate(585 322) rotate(-40)">شارع السجن</text>
                                    <text font-size="11" text-anchor="middle" transform="translate(532 318) rotate(85)">شارع علي</text>
                                </g>
                                <!-- markers -->
                                <circle cx="297" cy="326" r="12" fill="#f00000"/><use href="#wifi" x="289" y="319" width="16" height="14" fill="#fff"/>
                                <circle cx="588" cy="302" r="12" fill="#008a10"/><use href="#swap" x="581" y="295" width="14" height="14" fill="#fff"/>
                                <g fill="#d00010"><circle cx="1094" cy="230" r="7"/><circle cx="1108" cy="254" r="7"/><path stroke="#fff" stroke-width="2" d="M1090 230h8M1094 226v8M1104 254h8M1108 250v8"/></g>
                            </svg>
                            <div class="absolute top-[11px] left-[11px] flex w-[34px] flex-col rounded border-2 border-black/20 bg-white font-['Liberation_Sans',sans-serif] text-[22px] leading-[30px] font-bold text-black">
                                <button type="button" class="h-[31px] border-b border-[#aaa]">+</button>
                                <button type="button" class="h-[30px]">−</button>
                            </div>
                        </div>
                    </div>
                </section>
            </main>
        </div>
    </div>

    <!-- Add zone dialog -->
    <div class="fixed inset-0 flex items-center justify-center bg-black/50">
        <form role="dialog" aria-labelledby="dialog-title" class="w-full max-w-[676px] overflow-hidden rounded-[20px] border border-[#2b323a] bg-[#161b22] shadow-[0_0_40px_#1e2a5a33]">
            <div class="flex h-[68px] justify-between border-b border-[#30363d] bg-linear-to-l from-[#06b6d4] to-[#0891b2] px-[33px] text-white">
                <h2 id="dialog-title" class="flex items-center gap-[10px] pt-3 text-[21px] font-bold"><svg class="h-[22px] w-5 fill-current"><use href="#plus"/></svg>إضافة منطقة جديدة</h2>
                <button type="button" aria-label="إغلاق" class="flex h-16 items-center text-[#9ca3af]"><svg class="h-5 w-4 fill-current"><use href="#xmark"/></svg></button>
            </div>
            <div class="px-[33px] pt-[30px] pb-9">
                <label for="zone-name" class="block h-[31px] text-[16px] leading-[22px] font-bold">اسم المنطقة</label>
                <input id="zone-name" type="text" placeholder="أدخل اسم المنطقة" class="h-[46px] w-full rounded-[10px] border border-[#2a3036] bg-[#0d1117] px-[14px] font-['Noto_Naskh_Arabic',sans-serif] text-[15px] outline-none placeholder:text-[#858585]">
                <label for="zone-desc" class="mt-5 block h-[31px] text-[16px] leading-[22px] font-bold">الوصف</label>
                <textarea id="zone-desc" placeholder="أضف وصفاً للمنطقة" class="block h-[84px] w-full resize-none rounded-[10px] border border-[#2a3036] bg-[#0d1117] px-[15px] py-[10px] font-['DejaVu_Sans_Mono',monospace] text-[16px] outline-none placeholder:text-[#757575]"></textarea>
                <div class="mt-5 grid grid-cols-2 gap-[18px]">
                    <div>
                        <label for="zone-state" class="block h-[31px] text-[16px] leading-[22px] font-bold">حالة المنطقة</label>
                        <div class="relative">
                            <select id="zone-state" class="h-[46px] w-full appearance-none rounded-[10px] border border-[#2a3036] bg-[#0d1117] px-[17px] font-['Noto_Naskh_Arabic',sans-serif] text-[15px] font-bold text-white outline-none"><option>نشطة</option></select>
                            <svg class="pointer-events-none absolute top-5 left-1 h-2 w-[10px]" viewBox="0 0 10 8" fill="none" stroke="#fff" stroke-width="2"><path d="M1 1l4 4.500 4-4.500"/></svg>
                        </div>
                    </div>
                    <div>
                        <label for="zone-owner" class="block h-[31px] text-[16px] leading-[22px] font-bold">المسؤول</label>
                        <input id="zone-owner" type="text" placeholder="أدخل اسم المسؤول" class="h-[46px] w-full rounded-[10px] border border-[#2a3036] bg-[#0d1117] px-[14px] font-['Noto_Naskh_Arabic',sans-serif] text-[15px] outline-none placeholder:text-[#858585]">
                    </div>
                </div>
                <h3 class="mt-[2px] h-[43px] text-[16px] leading-[22px] font-bold">حدود المنطقة على الخريطة</h3>
                <div dir="ltr" class="relative h-[208px] overflow-hidden bg-[#dfdfdf] font-['Liberation_Sans',sans-serif] text-black">
                    <svg class="h-full w-full" viewBox="0 0 608 208" preserveAspectRatio="xMidYMid slice">
                        <defs>
                            <pattern id="hatch" width="6" height="60" patternUnits="userSpaceOnUse" patternTransform="rotate(37)"><path d="M0 0H6V60H0z" fill="#ececec"/><path d="M1 0V60" stroke="#b4b4b4"/></pattern>
                            <pattern id="city" width="10" height="10" patternUnits="userSpaceOnUse" patternTransform="matrix(2.300 2.450 -3 3.900 6 8)"><path d="M0 0H10" fill="none" stroke="#fff" stroke-width="3"/><path d="M0 0V10" fill="none" stroke="#fff" stroke-width="4"/></pattern>
                        </defs>
                        <path fill="url(#city)" d="M370-2H510L462 90 420 62z"/>
                        <path fill="url(#city)" d="M535-2H610V210H600L484 118 472 82z"/>
                        <path fill="url(#hatch)" d="M207 125L263 72 354 148 318 178 265 212 197 152zM105 112L168 166 140 209H70L45 178zM178 175L215 212H140L172 172z"/>
                        <g fill="none" stroke-linejoin="round">
                            <g stroke="#b9b9b9">
                                <path stroke-width="12" d="M14 164L85 99 124 57 184-4M45 66L85 99M69-2L124 59M192 9L263 66 362 149M305-2L263 66 207 122 140 212M442 107L395 138 362 152 318 182 271 212"/>
                            </g>
                            <path stroke="#fff" stroke-width="10" d="M14 164L85 99 124 57 184-4M45 66L85 99M69-2L124 59M192 9L263 66 362 149M305-2L263 66 207 122 140 212M446 104L395 138 362 152 318 182 271 212"/>
                            <path stroke="#fff" stroke-width="6" d="M160 46L231 102 322 179 362 212M57 132L140 208M192 156L260 212M85 99L168 166 220 212M124 57L215 142M0 0L30 40 45 66M45 40L82 40 88 48 118 48M50 62L68 56 120 60M0 50L28 76 58 110 36 126 10 150 0 140M34 60L20 45 38 30 80-4M98-2L125 28 140 32M155 30L168 46 130 90M140 70L150 60M208-2L192 12M105 112L110 125M470 96L478 118 468 116M420 62C408 80 418 100 432 110M372 10L445 90M432 72L448 84 456 92M40 212L105 112M0 110L25 130 57 132M222 212L320 178M300 212L310 190"/>
                            <path stroke="#b58f35" stroke-width="18" d="M464 90L478 66 534-10"/><path stroke="#fcd6a4" stroke-width="16" d="M464 90L478 66 534-10"/>
                            <path stroke="#e0705c" stroke-width="24" d="M278-12C300 14 335 36 370 55S430 80 458 86"/>
                            <path stroke="#e0705c" stroke-width="13" d="M462 96C472 130 484 160 492 212M462 92C495 118 500 160 509 212"/>
                            <path stroke="#f9b29c" stroke-width="22" d="M278-12C300 14 335 36 370 55S430 80 458 86"/>
                            <path stroke="#f9b29c" stroke-width="11" d="M462 96C472 130 484 160 492 212M462 92C495 118 500 160 509 212"/>
                            <path stroke="#a08aa8" stroke-dasharray="12 4 2 4" stroke-width="2" d="M280-4C305 20 335 38 372 57S420 78 446 88M470 100C486 124 494 150 500 190"/>
                            <path stroke="#a89aa4" d="M480 150L367 180 372 206"/>
                        </g>
                        <circle cx="455" cy="91" r="15" fill="#f9b29c"/><circle cx="453" cy="93" r="6" fill="#eee"/>
                        <path fill="#734a08" d="M451 96V86l2-3 2 3v10h3v2h-10v-2zM6 89h6v4H6zM4 103V97l3-2h5l2 2v6z"/>
                        <path stroke="#f4c06a" stroke-width="2" d="M5 96l8 7"/>
                        <path stroke="#b5bb70" stroke-width="18" fill="none" d="M-6 162C30 176 50 190 70 216"/><path stroke="#f7fabf" stroke-width="16" fill="none" d="M-6 162C30 176 50 190 70 216"/>
                        <path fill="#c4b5ab" d="M22 180L58 214H34L17 194z"/>
                        <path fill="#e6e2da" d="M446 142l24-7 3 12-24 8z"/>
                        <!-- bus stops -->
                        <g fill="#0092da"><rect x="408" y="78" width="15" height="15" rx="1"/><rect x="452" y="138" width="15" height="15" rx="1"/></g>
                        <path fill="#fff" d="M410 80h11v10h-2v2h-2v-2h-3v2h-2v-2h-2zM454 140h11v10h-2v2h-2v-2h-3v2h-2v-2h-2z"/><path fill="#0092da" d="M412 82h7v4h-7zM456 142h7v4h-7z"/>
                        <!-- mosques -->
                        <g fill="#000"><path id="moon" d="M270 135.500A6.500 6.500 0 1 0 271 146 5.500 5.500 0 1 1 270 135.500zM270 137l1.200 2.600 2.800.3-2 2 .6 2.800-2.600-1.400-2.600 1.400.6-2.800-2-2 2.800-.3z"/><use href="#moon" x="210" y="19"/><use href="#moon" x="-226" y="61"/></g>
                        <!-- one-way arrows -->
                        <g fill="none" stroke="#4a2008" stroke-width="2"><path d="M366 50l-9-5m4-1l-4 1 2 4M423 83l9 5m-4 1l4-1-2-4M519 18l6-9m-4 2l4-2v4M490 176l3 12m-3-3l3 3 1-4"/></g>
                        <g fill="none" stroke="#333" stroke-width="2"><path d="M46 140l6-9m-4 2l4-2v4M187 160l6-9m-4 2l4-2v4M148 197l-7 7m1-5l-1 5 5-1"/></g>
                        <g font-family="Noto Naskh Arabic, sans-serif" text-anchor="middle">
                            <text x="199" y="143" font-size="17" fill="#777" stroke="#fff" stroke-width="2" paint-order="stroke">القاهرة</text>
                            <text x="454" y="112" font-size="11" fill="#734a08" stroke="#fff" stroke-width="2" paint-order="stroke">جولة القاهرة</text>
                            <text font-size="12" fill="#333" transform="translate(171 186) rotate(-52)">شارع القاهرة</text>
                        </g>
                    </svg>
                    <div class="absolute top-[11px] left-[10px] flex w-[35px] flex-col rounded border-2 border-black/20 bg-white bg-clip-padding text-[22px] leading-[30px] font-bold">
                        <button type="button" class="h-[31px] border-b border-[#ccc]">+</button>
                        <button type="button" class="h-[31px]">−</button>
                    </div>
                    <div class="absolute right-0 bottom-0 flex h-[17px] items-center gap-[3px] bg-white/80 px-[5px] text-[13px] text-[#333]">
                        <a href="#" class="text-[#0078a8]">Leaflet</a><span>| ©</span><a href="#" class="text-[#0078a8]">OpenStreetMap</a><span>contributors</span>
                        <svg class="h-2 w-3" viewBox="0 0 12 8"><path fill="#4c7be1" d="M0 0h12v4H0z"/><path fill="#ffd500" d="M0 4h12v3H0z"/><path fill="#e0bc00" d="M0 7h12v1H0z"/></svg>
                    </div>
                </div>
                <p class="mt-2 text-[14px] leading-5">اضغط على الخريطة لتحديد حدود المنطقة</p>
            </div>
            <div class="flex h-[78px] items-center justify-end gap-3 border-t border-[#30363d] bg-[#21262d] px-[33px] font-['Noto_Naskh_Arabic',sans-serif] text-[14px] font-bold text-white">
                <button type="button" class="flex h-10 w-[94px] items-center justify-center gap-2 rounded-lg"><svg class="h-[18px] w-[14px] fill-current"><use href="#xmark"/></svg>إلغاء</button>
                <button type="submit" class="flex h-10 w-[136px] items-center justify-center gap-2 rounded-lg bg-linear-to-l from-[#06b6d4] to-[#0891b2]"><svg class="h-4 w-4 fill-current"><use href="#save"/></svg>حفظ المنطقة</button>
            </div>
        </form>
    </div>

    <!-- Quick tools -->
    <div class="fixed bottom-[26px] left-[26px] flex h-[160px] w-[68px] flex-col items-center justify-center gap-6 rounded-[24px] border border-[#2b323a] bg-[#161b22] shadow-lg">
        <button type="button" aria-label="تبديل الاتجاه"><svg class="h-[22px] w-[22px] fill-[#9ca3af]"><use href="#swap"/></svg></button>
        <button type="button" aria-label="المظهر"><svg class="h-[22px] w-[22px] fill-[#9ca3af]"><use href="#sun"/></svg></button>
        <button type="button" aria-label="الألوان"><svg class="h-[22px] w-[22px] fill-[#9ca3af]"><use href="#palette"/></svg></button>
    </div>

</body>
</html>
